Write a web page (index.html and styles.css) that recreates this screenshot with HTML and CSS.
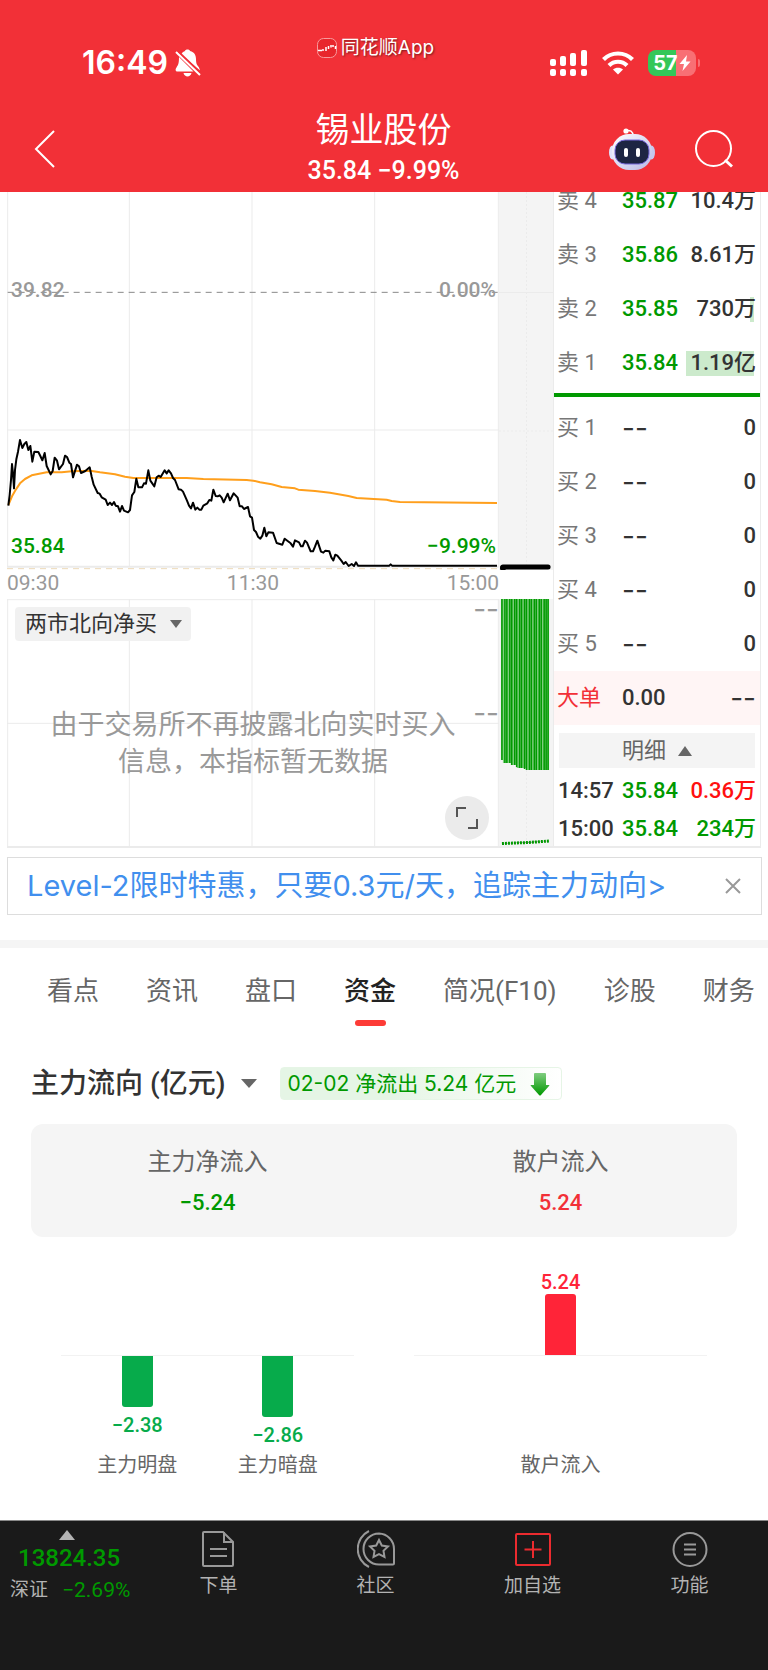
FILE: index.html
```html
<!DOCTYPE html>
<html lang="zh-CN">
<head>
  <meta charset="UTF-8" />
  <meta name="viewport" content="width=device-width, initial-scale=1.0" />
  <title>锡业股份</title>
  <link rel="stylesheet" href="styles.css">
</head>
<body>

  <!-- HEADER -->
  <header>
    <div class="status-bar">
      <div class="status-time">
        <span>16:49</span>
        <svg width="26" height="28" viewBox="0 0 26 28">
          <path d="M6 5.500C7 3.500 9 2.300 10 2C10.300 0 14.700 0 15 2C19.500 3 21 6.500 21 10C21 15 22 16 24 18.500L25 21.500Z" fill="#fff"/>
          <path d="M4 8C4 15 3 16 1.500 18.500C0 20.500 0.500 22.500 2.500 22.500H18.500Z" fill="#fff"/>
          <path d="M8.500 24H16.500C15.500 28.500 9.500 28.500 8.500 24Z" fill="#fff"/>
          <path d="M1 3L25 26" stroke="#fff" stroke-width="2"/>
          <path d="M3 2L25.500 23.500" stroke="#f23037" stroke-width="1.500"/>
        </svg>
      </div>
      <div class="status-app">
        <svg width="20" height="20" viewBox="0 0 20 20">
          <rect x="0.500" y="0.500" width="19" height="19" rx="6" fill="#e8262c" stroke="#f79a9c"/>
          <path d="M1 12.500H5M6 13V11M9 13V9M11.500 11V8M14 9.500V7M16 7V9M18.500 8V11" stroke="#fff" stroke-width="1.500" fill="none"/>
        </svg>
        <span>同花顺App</span>
      </div>
      <div class="status-icons">
        <svg width="38" height="26" viewBox="0 0 38 26" fill="#fff">
          <rect x="0" y="9" width="6" height="7" rx="2"/>
          <rect x="10" y="6" width="6" height="10" rx="2"/>
          <rect x="20" y="3" width="6" height="13" rx="2"/>
          <rect x="31" y="0" width="6" height="16" rx="2"/>
          <rect x="0" y="19" width="6" height="7" rx="2"/>
          <rect x="10" y="19" width="6" height="7" rx="2"/>
          <rect x="20" y="19" width="6" height="7" rx="2"/>
          <rect x="31" y="19" width="6" height="7" rx="2"/>
        </svg>
        <svg width="32" height="24" viewBox="0 0 32 24" fill="none" stroke="#fff" stroke-width="4.200">
          <path d="M1.500 8.500C9.500 0.500 22.500 0.500 30.500 8.500"/>
          <path d="M7 14.500C12 9.500 20 9.500 25 14.500"/>
          <path d="M16 23.500L11 18.500C13.500 16 18.500 16 21 18.500Z" fill="#fff" stroke="none"/>
        </svg>
        <div class="battery">
          <span>57</span>
          <svg width="12" height="16" viewBox="0 0 12 16"><path d="M8 0L0.500 9H5L3.500 16L11.500 6.500H7Z" fill="#fff"/></svg>
        </div>
      </div>
    </div>

    <div class="title-bar">
      <button class="icon-btn back" aria-label="返回">
        <svg width="22" height="40" viewBox="0 0 22 40"><path d="M20 2L2 20L20 38" fill="none" stroke="#fff" stroke-width="2"/></svg>
      </button>
      <div class="stock-title">
        <h1>锡业股份</h1>
        <p>35.84 −9.99%</p>
      </div>
      <div class="title-actions">
        <button class="icon-btn" aria-label="智能助手">
          <svg width="46" height="42" viewBox="0 0 46 42">
            <defs>
              <linearGradient id="shell" x1="0" y1="0" x2="1" y2="1">
                <stop offset="0" stop-color="#fff"/>
                <stop offset="1" stop-color="#b9b9e6"/>
              </linearGradient>
            </defs>
            <path d="M17 2.500C21 2 24 3 24 8" fill="none" stroke="#fff" stroke-width="1.500"/>
            <circle cx="17" cy="3" r="2.600" fill="#fff"/>
            <ellipse cx="3.500" cy="24.500" rx="3.500" ry="7" fill="#dfe3fa"/>
            <ellipse cx="42.500" cy="24.500" rx="3.500" ry="7" fill="#c5c8ee"/>
            <rect x="3" y="6" width="40" height="36" rx="17" fill="url(#shell)"/>
            <rect x="6" y="12" width="34" height="24" rx="10" fill="#1d2543" stroke="#7769dc"/>
            <rect x="15" y="20" width="4" height="9" rx="2" fill="#fff"/>
            <rect x="27" y="20" width="4" height="9" rx="2" fill="#fff"/>
          </svg>
        </button>
        <button class="icon-btn" aria-label="搜索">
          <svg width="38" height="38" viewBox="0 0 38 38" fill="none" stroke="#fff" stroke-width="2"><circle cx="18.500" cy="18.500" r="17.500"/><path d="M30 30L37 36.500" stroke-width="3"/></svg>
        </button>
      </div>
    </div>
  </header>

  <main>
    <!-- QUOTE: chart, after-hours strip, order book -->
    <section class="quote">
      <div class="chart">
        <div class="price-chart">
          <svg viewBox="21 6 1476 1134" preserveAspectRatio="none">
            <path class="grid" d="M23 6V1130M388 6V1130M756 6V1130M1124 6V1130M1495 6V1130M21 720H1497"/>
            <path class="grid base" d="M21 1130H1497"/>
            <path class="dashed" d="M23 307H1497"/>
            <path class="dashed limit" d="M21 1136H1497"/>
            <polyline class="avg-line" points="25,945 36,919 48,898 60,880 75,867 95,856 125,850 140,847 185,847 215,844 270,842 300,847 345,853 375,860 400,864 560,864 610,867 740,870 760,872 780,877 815,883 845,891 885,895 895,899 945,903 990,908 1045,918 1070,924 1160,929 1175,933 1200,936 1491,939"/>
            <polyline class="price-line" points="25,947 29,915 33,870 36,822 39,850 42,895 45,840 49,808 54,785 60,750 67,774 73,762 79,756 85,780 91,768 97,815 103,785 115,786 121,798 127,811 134,789 140,828 152,853 158,843 164,803 171,812 177,838 189,822 195,797 201,801 208,818 213,822 219,862 231,824 237,829 243,849 256,843 269,832 275,860 281,884 293,909 299,911 305,922 317,929 323,945 330,938 336,945 342,936 347,947 354,949 360,965 366,948 372,962 384,967 390,960 396,916 403,906 409,866 415,892 426,892 432,880 438,881 445,841 451,872 463,889 470,862 476,857 482,861 494,841 500,850 506,841 513,850 519,864 525,870 536,898 543,899 549,905 561,932 567,947 573,955 579,938 586,959 592,953 598,959 604,959 610,947 622,940 628,930 634,932 640,899 647,918 653,919 659,916 665,923 671,937 683,911 690,931 701,910 713,923 719,949 726,949 732,957 744,951 750,979 756,983 762,1020 768,1026 774,1040 781,1046 787,1037 793,1013 799,1039 805,1027 819,1028 830,1059 847,1064 854,1046 872,1060 879,1070 885,1051 897,1057 903,1069 908,1069 915,1052 921,1058 932,1084 939,1084 945,1070 952,1052 963,1085 970,1088 976,1082 988,1084 994,1102 1000,1111 1006,1094 1012,1097 1024,1112 1031,1122 1037,1116 1046,1128 1055,1122 1062,1128 1068,1117 1074,1127 1168,1127 1172,1123 1176,1127 1491,1127"/>
          </svg>
          <span class="chart-label mid left">39.82</span>
          <span class="chart-label mid right">0.00%</span>
          <span class="chart-label low left">35.84</span>
          <span class="chart-label low right">−9.99%</span>
        </div>
        <div class="time-axis">
          <span>09:30</span>
          <span>11:30</span>
          <span>15:00</span>
        </div>
        <div class="indicator">
          <svg class="indicator-grid" viewBox="21 0 1476 741" preserveAspectRatio="none">
            <path class="grid" d="M23 0V741M388 0V741M756 0V741M1124 0V741M1495 0V741M21 2H1497M21 373H1497"/>
          </svg>
          <button class="indicator-select">两市北向净买 <i class="caret"></i></button>
          <p class="indicator-empty">由于交易所不再披露北向实时买入<br>信息，本指标暂无数据</p>
          <span class="dash scale-top">--</span>
          <span class="dash scale-mid">--</span>
          <button class="expand" aria-label="全屏">
            <svg width="24" height="24" viewBox="0 0 24 24" fill="none" stroke="#555" stroke-width="2"><path d="M2 11V2H11M22 13V22H13"/></svg>
          </button>
        </div>
      </div>

      <div class="after-hours">
        <svg class="after-price" viewBox="0 0 55 378" preserveAspectRatio="none">
          <path class="grid" d="M0 100.500H55"/>
          <path class="grid dots" d="M28 0V374M0 239H55"/>
          <path d="M4 375H50" stroke="#000" stroke-width="5" stroke-linecap="round"/>
          <circle cx="4" cy="376" r="3"/>
        </svg>
        <svg class="after-volume" viewBox="0 0 55 247" preserveAspectRatio="none">
          <path class="grid dots" d="M28 171V247"/>
          <path d="M2 0H51V171H28V169H18V166H12V164H4V161H2Z" fill="#7fcf7f"/>
          <path d="M3 0V161M6 0V164M8 0V164M11 0V164M13 0V166M16 0V166M18 0V168M21 0V169M23 0V169M26 0V170M28 0V171M31 0V171M33 0V171M36 0V171M38 0V171M41 0V171M43 0V171M46 0V171M48 0V171M50 0V171" stroke="#090" stroke-width="1.500"/>
          <path d="M3 244.500L30 243.500L51 242" stroke="#090" stroke-width="3" stroke-dasharray="2 1"/>
        </svg>
      </div>

      <div class="book">
        <table class="orders sell">
          <tr><th>卖 4</th><td class="down">35.87</td><td>10.4万</td></tr>
          <tr><th>卖 3</th><td class="down">35.86</td><td>8.61万</td></tr>
          <tr><th>卖 2</th><td class="down">35.85</td><td class="depth" style="--depth: 4px">730万</td></tr>
          <tr><th>卖 1</th><td class="down">35.84</td><td class="depth" style="--depth: 68px">1.19亿</td></tr>
        </table>
        <div class="split"></div>
        <table class="orders buy">
          <tr><th>买 1</th><td class="dash">--</td><td>0</td></tr>
          <tr><th>买 2</th><td class="dash">--</td><td>0</td></tr>
          <tr><th>买 3</th><td class="dash">--</td><td>0</td></tr>
          <tr><th>买 4</th><td class="dash">--</td><td>0</td></tr>
          <tr><th>买 5</th><td class="dash">--</td><td>0</td></tr>
          <tr class="big-order"><th>大单</th><td>0.00</td><td class="dash">--</td></tr>
        </table>
        <button class="detail-btn">明细 <i class="caret up"></i></button>
        <table class="orders ticks">
          <tr><td>14:57</td><td class="down">35.84</td><td class="up">0.36万</td></tr>
          <tr><td>15:00</td><td class="down">35.84</td><td class="down">234万</td></tr>
        </table>
      </div>
    </section>

    <!-- PROMO -->
    <div class="promo">
      <a href="#">Level-2限时特惠，只要0.3元/天，追踪主力动向&gt;</a>
      <button class="icon-btn" aria-label="关闭">
        <svg width="16" height="16" viewBox="0 0 16 16"><path d="M1 1L15 15M15 1L1 15" stroke="#999" stroke-width="2"/></svg>
      </button>
    </div>

    <!-- TABS -->
    <nav class="tabs">
      <a href="#">看点</a>
      <a href="#">资讯</a>
      <a href="#">盘口</a>
      <a href="#" class="active">资金</a>
      <a href="#">简况(F10)</a>
      <a href="#">诊股</a>
      <a href="#">财务</a>
    </nav>

    <!-- MONEY FLOW -->
    <section class="flow">
      <div class="flow-head">
        <h2>主力流向 (亿元)</h2>
        <i class="caret large"></i>
        <div class="flow-tag">
          <span>02-02 净流出 5.24 亿元</span>
          <svg width="20" height="24" viewBox="0 0 20 24">
            <defs>
              <linearGradient id="arrow" x1="0" y1="0" x2="0" y2="1">
                <stop offset="0" stop-color="#7fcc7f"/>
                <stop offset="1" stop-color="#090"/>
              </linearGradient>
            </defs>
            <path d="M4 2Q4 1 5 1H15Q16 1 16 2V13H19Q20 13 19 14L11 23Q10 24 9 23L1 14Q0 13 1 13H4Z" fill="url(#arrow)"/>
          </svg>
        </div>
      </div>

      <div class="flow-summary">
        <div><p>主力净流入</p><strong class="down">−5.24</strong></div>
        <div><p>散户流入</p><strong class="up">5.24</strong></div>
      </div>

      <div class="flow-charts">
        <div class="bars">
          <div class="bar-col">
            <div class="bar-up"></div>
            <div class="bar-down"><i style="height: 51px"></i><b>−2.38</b></div>
            <span>主力明盘</span>
          </div>
          <div class="bar-col">
            <div class="bar-up"></div>
            <div class="bar-down"><i style="height: 61px"></i><b>−2.86</b></div>
            <span>主力暗盘</span>
          </div>
        </div>
        <div class="bars">
          <div class="bar-col">
            <div class="bar-up"><b>5.24</b><i style="height: 61px"></i></div>
            <div class="bar-down"></div>
            <span>散户流入</span>
          </div>
        </div>
      </div>
    </section>
  </main>

  <!-- BOTTOM BAR -->
  <footer>
    <a href="#" class="index">
      <i class="caret up pale"></i>
      <span class="index-value">13824.35</span>
      <span class="index-row">深证 <span>−2.69%</span></span>
    </a>
    <a href="#">
      <svg width="38" height="38" viewBox="0 0 38 38" fill="none" stroke="#999" stroke-width="2"><path d="M4 2H23L33 12V35Q33 36 32 36H4Q3 36 3 35V3Q3 2 4 2ZM24 2V12H33M10 19H27M10 26H27"/></svg>
      下单
    </a>
    <a href="#">
      <svg width="38" height="38" viewBox="0 0 38 38" fill="none" stroke="#999" stroke-width="2">
        <path d="M12 1A20 20 0 0 0 12 37"/>
        <path d="M22 3.500A15.500 15.500 0 1 0 22 34.500H36Q37 34.500 37 33.500V19A15.500 15.500 0 0 0 22 3.500Z"/>
        <path d="M22 10L24.800 15.500L31 16.500L26.500 20.800L27.500 27L22 24.200L16.500 27L17.500 20.800L13 16.500L19.200 15.500Z"/>
      </svg>
      社区
    </a>
    <a href="#">
      <svg width="38" height="38" viewBox="0 0 38 38" fill="none" stroke="#ec2b2f" stroke-width="2"><rect x="2" y="4" width="34" height="31" rx="1"/><path d="M19 11V28M10.500 19.500H27.500"/></svg>
      加自选
    </a>
    <a href="#">
      <svg width="38" height="38" viewBox="0 0 38 38" fill="none" stroke="#999" stroke-width="2"><circle cx="19" cy="19.500" r="16.500"/><path d="M13 14.500H25M13 19.500H25M13 24.500H25"/></svg>
      功能
    </a>
  </footer>

</body>
</html>
```
FILE: styles.css
```css
/* RESET */
*, *::before, *::after {
  box-sizing: border-box;
  margin: 0;
  padding: 0;
}

body {
  display: flex;
  flex-direction: column;
  min-height: 100vh;
  font-family: Roboto, 'Noto Sans CJK SC', sans-serif;
  background-color: #fff;
  color: #333;
}

a {
  text-decoration: none;
  color: inherit;
}

button {
  border: none;
  background: none;
  font-family: inherit;
  color: inherit;
  cursor: pointer;
}

svg {
  display: block;
}

.down {
  color: #090;
}

.up {
  color: #ff1010;
}

.caret {
  display: inline-block;
  border: 6px solid transparent;
  border-top: 8px solid #666;
  border-bottom: none;
}

.caret.large {
  border-width: 9px 8px 0;
}

.caret.up {
  border-width: 0 7px 10px;
  border-bottom: 10px solid #666;
}

.caret.pale {
  border-width: 0 8px 10px;
  border-bottom-color: #b3b3b3;
}

/* HEADER */
header {
  position: relative;
  z-index: 2;
  height: 192px;
  background-color: #f23037;
  color: #fff;
}

.status-bar {
  display: flex;
  justify-content: space-between;
  height: 100px;
  padding: 37px 68px 0 82px;
}

.status-time,
.status-app,
.status-icons {
  display: flex;
  align-items: center;
}

.status-time {
  gap: 7px;
  height: 52px;
  font: 600 32px/52px Inter, sans-serif;
}

.status-app {
  gap: 4px;
  height: 22px;
  font: 19px/22px Inter, 'Noto Sans CJK SC', sans-serif;
  text-shadow: 1px 1px 2px rgba(0, 0, 0, 0.5);
}

.status-icons {
  gap: 14px;
  height: 52px;
}

.battery {
  position: relative;
  display: flex;
  align-items: center;
  justify-content: center;
  gap: 1px;
  width: 48px;
  height: 26px;
  margin-right: 4px;
  border-radius: 8px;
  background: linear-gradient(90deg, #34c759 58%, #f86f74 58%);
  font: 700 20px/26px Inter, sans-serif;
}

.battery::after {
  content: '';
  position: absolute;
  right: -4px;
  top: 9px;
  width: 2px;
  height: 8px;
  border-radius: 0 2px 2px 0;
  background-color: #f86f74;
}

.title-bar {
  display: grid;
  grid-template-columns: 1fr auto 1fr;
  align-items: start;
  padding: 6px 35px 0 34px;
}

.title-bar .back {
  justify-self: start;
  margin-top: 23px;
}

.stock-title {
  text-align: center;
}

.stock-title h1 {
  font-size: 34px;
  font-weight: 400;
  line-height: 48px;
}

.stock-title p {
  font-size: 25px;
  font-weight: 500;
  line-height: 34px;
}

.title-actions {
  display: flex;
  justify-content: flex-end;
  align-items: center;
  gap: 40px;
  margin-top: 22px;
}

/* QUOTE */
.quote {
  display: flex;
  height: 656px;
  margin: 0 7px;
  overflow: hidden;
  border-bottom: 2px solid #ebebeb;
}

.chart {
  flex: 1;
}

.price-chart {
  position: relative;
  height: 378px;
}

.price-chart svg,
.indicator-grid {
  width: 100%;
  height: 100%;
}

.quote path,
.quote polyline {
  vector-effect: non-scaling-stroke;
}

.grid {
  fill: none;
  stroke: #ebebeb;
  stroke-width: 1;
}

.grid.base {
  stroke-width: 2;
}

.grid.dots {
  stroke-dasharray: 2 2;
}

.dashed {
  stroke: #888;
  stroke-width: 1;
  stroke-dasharray: 6 5;
}

.dashed.limit {
  stroke: #ecd9b8;
}

.avg-line,
.price-line {
  fill: none;
  stroke: #ff9f1c;
  stroke-width: 2;
  stroke-linejoin: round;
}

.price-line {
  stroke: #000;
}

.chart-label {
  position: absolute;
  font-size: 21px;
  font-weight: 500;
  line-height: 24px;
}

.chart-label.mid {
  top: 86px;
  color: #999;
}

.chart-label.low {
  bottom: 12px;
  color: #090;
}

.chart-label.left {
  left: 4px;
}

.chart-label.right {
  right: 3px;
}

.time-axis {
  display: flex;
  justify-content: space-between;
  height: 29px;
  color: #999;
  font-size: 21px;
  line-height: 26px;
}

.indicator {
  position: relative;
  height: 247px;
}

.indicator-select {
  position: absolute;
  left: 8px;
  top: 8px;
  display: flex;
  align-items: center;
  gap: 13px;
  height: 34px;
  padding: 0 9px 0 10px;
  border-radius: 4px;
  background-color: rgba(240, 240, 240, 0.9);
  font-size: 22px;
  line-height: 34px;
}

.indicator-empty {
  position: absolute;
  left: 0;
  right: 0;
  top: 108px;
  color: #999;
  font-size: 27px;
  line-height: 37px;
  text-align: center;
}

.dash {
  font-family: Inter, sans-serif;
}

.scale-top,
.scale-mid {
  position: absolute;
  right: 0;
  color: #999;
  font-size: 28px;
  line-height: 28px;
}

.scale-top {
  top: -4px;
}

.scale-mid {
  top: 100px;
}

.expand {
  position: absolute;
  right: 10px;
  bottom: 6px;
  display: flex;
  align-items: center;
  justify-content: center;
  width: 44px;
  height: 44px;
  border-radius: 50%;
  background-color: #ebebeb;
}

.after-hours {
  display: flex;
  flex-direction: column;
  gap: 29px;
  width: 55px;
  border-right: 1px solid #ebebeb;
}

.after-price,
.after-volume {
  width: 100%;
  background-color: #f4f4f4;
}

.after-price {
  height: 378px;
}

.after-volume {
  height: 247px;
}

/* ORDER BOOK */
.book {
  width: 207px;
  border-right: 1px solid #ebebeb;
}

.orders {
  width: 100%;
  table-layout: fixed;
  border-collapse: collapse;
  font-size: 22px;
  font-weight: 500;
  line-height: 24px;
}

.orders.sell {
  margin-top: -18px;
}

.orders tr {
  height: 54px;
}

.orders th {
  width: 68px;
  padding-left: 3px;
  color: #777;
  font-weight: 400;
  text-align: left;
}

.orders td:last-child {
  width: 78px;
  padding-right: 4px;
  text-align: right;
}

.orders td.dash {
  font-size: 28px;
  font-weight: 400;
}

.orders td.depth {
  background: linear-gradient(#cceacc, #cceacc) no-repeat right 6px center / var(--depth) 25px;
}

.split {
  height: 4px;
  margin: 3px 0 4px;
  background-color: #090;
}

.big-order {
  background-color: #fff5f5;
}

.orders .big-order th {
  color: #f23037;
}

.detail-btn {
  display: flex;
  align-items: center;
  justify-content: center;
  gap: 12px;
  width: calc(100% - 10px);
  height: 35px;
  margin: 8px 5px 4px;
  background-color: #f4f4f4;
  color: #666;
  font-size: 22px;
  line-height: 35px;
}

.orders.ticks tr {
  height: 38px;
}

.orders.ticks td:first-child {
  width: 68px;
  padding-left: 4px;
}

/* PROMO */
.promo {
  display: flex;
  align-items: center;
  justify-content: space-between;
  height: 58px;
  margin: 9px 6px 25px 7px;
  padding: 0 20px 0 19px;
  border: 1px solid #ddd;
  color: #418fee;
  font: 29px/40px Inter, 'Noto Sans CJK SC', sans-serif;
}

/* TABS */
.tabs {
  display: flex;
  gap: 47px;
  padding: 22px 0 0 47px;
  overflow: hidden;
  border-top: 8px solid #f5f5f5;
  color: #666;
  font-size: 26px;
  line-height: 42px;
  white-space: nowrap;
}

.tabs .active {
  color: #222;
  font-weight: 500;
}

.tabs .active::after {
  content: '';
  display: block;
  width: 31px;
  height: 6px;
  margin: 8px auto 0;
  border-radius: 3px;
  background-color: #fd3b36;
}

/* MONEY FLOW */
.flow {
  padding: 41px 31px;
}

.flow-head {
  display: flex;
  align-items: center;
  height: 33px;
}

.flow-head h2 {
  margin-right: 16px;
  font-size: 28px;
  font-weight: 500;
  line-height: 33px;
}

.flow-tag {
  display: flex;
  align-items: center;
  gap: 14px;
  height: 33px;
  margin-left: 23px;
  padding: 0 11px 0 6px;
  border: 1px solid #e6f5e6;
  border-radius: 4px;
  background: linear-gradient(90deg, #e5f5e5 40%, #fff);
  color: #090;
  font: 21px/30px Inter, 'Noto Sans CJK SC', sans-serif;
}

.flow-summary {
  display: grid;
  grid-template-columns: 1fr 1fr;
  height: 113px;
  margin-top: 24px;
  padding-top: 20px;
  border-radius: 12px;
  background-color: #f5f5f5;
  text-align: center;
}

.flow-summary p {
  color: #666;
  font-size: 24px;
  line-height: 36px;
}

.flow-summary strong {
  font-size: 22px;
  font-weight: 500;
  line-height: 46px;
}

.flow-summary .up {
  color: #f23037;
}

.flow-charts {
  display: grid;
  grid-template-columns: 1fr 1fr;
}

.bars {
  display: flex;
  justify-content: space-around;
  margin: 0 30px;
  padding: 0 6px;
  background: linear-gradient(#f2f2f2, #f2f2f2) no-repeat 0 118px / 100% 1px;
}

.bar-col {
  flex: 1;
  text-align: center;
}

.bar-up,
.bar-down {
  display: flex;
  flex-direction: column;
  align-items: center;
}

.bar-up {
  justify-content: flex-end;
  height: 118px;
}

.bar-down {
  height: 98px;
  padding-top: 1px;
}

.bars i {
  width: 31px;
  border-radius: 3px 3px 0 0;
  background-color: #ff2438;
}

.bars .bar-down i {
  border-radius: 0 0 3px 3px;
  background-color: #07ab4b;
}

.bars b {
  color: #ff2438;
  font-size: 20px;
  font-weight: 500;
  line-height: 24px;
}

.bars .bar-down b {
  margin-top: 6px;
  color: #07ab4b;
}

.bar-col span {
  display: block;
  color: #666;
  font-size: 20px;
  line-height: 24px;
}

/* BOTTOM BAR */
footer {
  display: flex;
  height: 150px;
  margin-top: auto;
  border-top: 1px solid #888;
  background-color: #1a1a1a;
  color: #b3b3b3;
}

footer a {
  display: flex;
  flex: 1;
  flex-direction: column;
  align-items: center;
  gap: 6px;
  padding-top: 9px;
  font-size: 19px;
  line-height: 24px;
}

footer .index {
  flex: 0 0 140px;
  align-items: flex-start;
  gap: 4px;
  padding-left: 10px;
}

.index .caret {
  margin-left: 49px;
}

.index-value {
  margin-left: 8px;
  color: #090;
  font-size: 24px;
  font-weight: 500;
  line-height: 29px;
}

.index-row {
  display: flex;
  gap: 14px;
  line-height: 26px;
}

.index-row span {
  color: #090;
  font-size: 21px;
}
```
